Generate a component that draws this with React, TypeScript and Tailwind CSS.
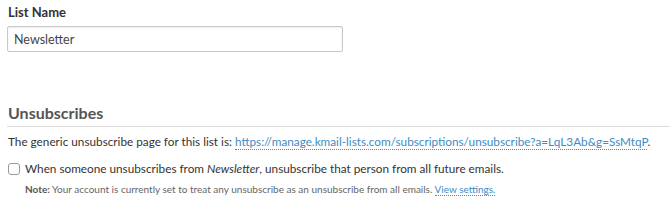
export default function App() {
  const font = { fontFamily: 'Lato, "Open Sans", sans-serif' };
  return (
    <div className="w-[670px] h-[204px] overflow-hidden bg-white text-[#333]" style={font}>
      <div className="pl-[8px] pt-[3px]">
        <div className="text-[13px] font-bold leading-[18px] text-[#333]">List Name</div>
        <input
          className="mt-[5px] -ml-[1px] block h-[26px] w-[336px] rounded-[2px] border border-[#c8c8c8] px-[6px] text-[12.5px] text-[#444] shadow-[inset_0_1px_2px_rgba(0,0,0,0.08)] outline-none"
          defaultValue="Newsletter"
        />
      </div>
      <div className="mt-[51px] pl-[8px]">
        <h2 className="text-[16px] font-bold leading-[20px] text-[#555] pb-[3px] border-b border-[#dcdcdc] -ml-[1px] pl-[1px]">
          Unsubscribes
        </h2>
        <p className="mt-[6px] whitespace-nowrap text-[11.75px] leading-[18px] text-[#333]">
          The generic unsubscribe page for this list is:{' '}
          <a className="text-[#3d8bc4] border-b border-dotted border-[#3d8bc4]">
            https://manage.kmail-lists.com/subscriptions/unsubscribe?a=LqL3Ab&amp;g=SsMtqP
          </a>
          .
        </p>
        <label className="mt-[9px] flex items-center gap-[5px] whitespace-nowrap text-[11.75px] leading-[18px]">
          <span className="block h-[12px] w-[12px] rounded-[3px] border border-[#999] bg-white" />
          <span>
            When someone unsubscribes from <em>Newsletter</em>, unsubscribe that person from all future emails.
          </span>
        </label>
        <p className="mt-[3px] pl-[17px] whitespace-nowrap text-[10px] leading-[16px] text-[#666]">
          <strong className="font-bold text-[#555]">Note:</strong> Your account is currently set to treat any unsubscribe as an unsubscribe from all emails.{' '}
          <a className="text-[#3d8bc4] border-b border-dotted border-[#3d8bc4]">View settings.</a>
        </p>
      </div>
    </div>
  );
}
